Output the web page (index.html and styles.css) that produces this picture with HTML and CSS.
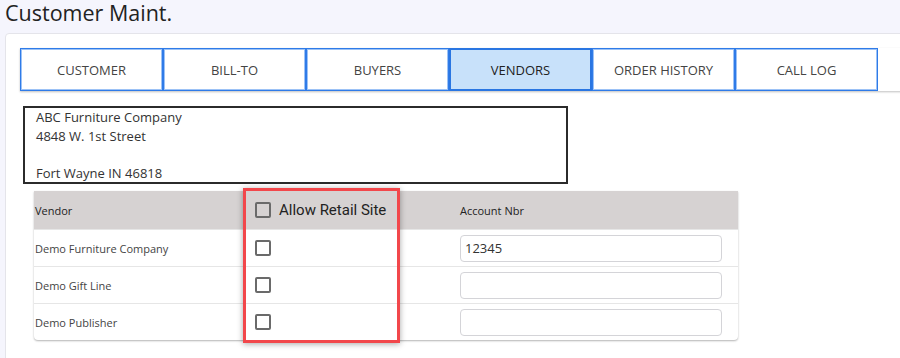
FILE: index.html
```html
<!DOCTYPE html>
<html lang="en">
<head>
    <meta charset="UTF-8">
    <meta name="viewport" content="width=device-width, initial-scale=1.0">
    <title>Customer Maint.</title>
    <link rel="stylesheet" href="styles.css">
</head>
<body>
    <h1 class="page-title">Customer Maint.</h1>

    <div class="panel">
        <div class="tabs">
            <div class="tab">CUSTOMER</div>
            <div class="tab">BILL-TO</div>
            <div class="tab">BUYERS</div>
            <div class="tab active">VENDORS</div>
            <div class="tab">ORDER HISTORY</div>
            <div class="tab">CALL LOG</div>
        </div>

        <div class="address-box">
            <div>ABC Furniture Company</div>
            <div>4848 W. 1st Street</div>
            <div>&nbsp;</div>
            <div>Fort Wayne IN 46818</div>
        </div>

        <div class="vendor-table">
            <div class="row head">
                <div class="cell name">Vendor</div>
                <div class="cell check">
                    <span class="box"></span>
                    <span class="retail-label">Allow Retail Site</span>
                </div>
                <div class="cell acct">Account Nbr</div>
            </div>
            <div class="row">
                <div class="cell name">Demo Furniture Company</div>
                <div class="cell check"><span class="box"></span></div>
                <div class="cell acct"><input class="acct-input" type="text" value="12345"></div>
            </div>
            <div class="row">
                <div class="cell name">Demo Gift Line</div>
                <div class="cell check"><span class="box"></span></div>
                <div class="cell acct"><input class="acct-input" type="text" value=""></div>
            </div>
            <div class="row">
                <div class="cell name">Demo Publisher</div>
                <div class="cell check"><span class="box"></span></div>
                <div class="cell acct"><input class="acct-input" type="text" value=""></div>
            </div>

            <!-- annotation over the retail column -->
            <div class="highlight"></div>
        </div>
    </div>
</body>
</html>
```

FILE: styles.css
```css
* {
    margin: 0;
    padding: 0;
    box-sizing: border-box;
}

body {
    background-color: #f5f5fd;
    font-family: 'Open Sans', sans-serif;
    color: #333;
    overflow: hidden;
}

.page-title {
    font-size: 21.5px;
    font-weight: 400;
    line-height: 26px;
    color: #222;
    padding-left: 5px;
}

.panel {
    margin: 7px -20px 0 5px;
    background-color: #fff;
    border: 1px solid #e4e4ea;
    border-radius: 4px;
    padding: 14px 0 0 14px;
    min-height: 340px;
}

/* tab strip */
.tabs {
    display: flex;
    height: 43px;
    background-color: #fff;
    box-shadow: 0 1px 2px rgba(0, 0, 0, 0.25);
}

.tab {
    width: 143px;
    display: flex;
    align-items: center;
    justify-content: center;
    font-size: 13px;
    color: #444;
    border: 1px solid #2f7be8;
    box-shadow: inset 0 0 0 1px #9cc2f6;
}

.tab.active {
    background-color: #c8e1fa;
    color: #222;
    border: 2px solid #2a76e2;
    box-shadow: none;
}

.address-box {
    margin: 15px 0 0 3px;
    width: 545px;
    border: 2px solid #2b2b2b;
    padding-left: 11px;
    font-size: 13px;
    line-height: 18.5px;
    color: #333;
}

/* vendors grid */
.vendor-table {
    position: relative;
    margin: 7px 0 0 14px;
    width: 704px;
    background-color: #fff;
    border-radius: 0 0 4px 4px;
    box-shadow: 0 1px 2px rgba(0, 0, 0, 0.3);
}

.row {
    display: grid;
    grid-template-columns: 209px 205px 1fr;
    height: 37px;
    border-top: 1px solid #e6e6e6;
    font-size: 11px;
    color: #444;
}

.row.head {
    height: 38px;
    border-top: none;
    background-color: #d6d2d2;
    color: #222;
}

.cell {
    display: flex;
    align-items: center;
}

.cell.name {
    padding-left: 1px;
}

.cell.check {
    padding-left: 12px;
    gap: 8px;
}

.cell.acct {
    padding: 0 16px 0 12px;
}

.box {
    width: 16px;
    height: 16px;
    border: 2px solid #6a6a6a;
    border-radius: 2px;
    background-color: #fff;
}

.row.head .box {
    background-color: transparent;
}

.retail-label {
    font-family: Roboto, sans-serif;
    font-size: 15px;
    color: #222;
}

.acct-input {
    width: 100%;
    height: 27px;
    border: 1px solid #d4d4d8;
    border-radius: 4px;
    padding-left: 4px;
    font-family: 'Open Sans', sans-serif;
    font-size: 13px;
    color: #333;
    outline: none;
}

.highlight {
    position: absolute;
    left: 209px;
    top: -3px;
    width: 157px;
    height: 155px;
    border: 3px solid #f2474b;
    box-shadow: 0 1px 6px rgba(0, 0, 0, 0.35);
}
```
